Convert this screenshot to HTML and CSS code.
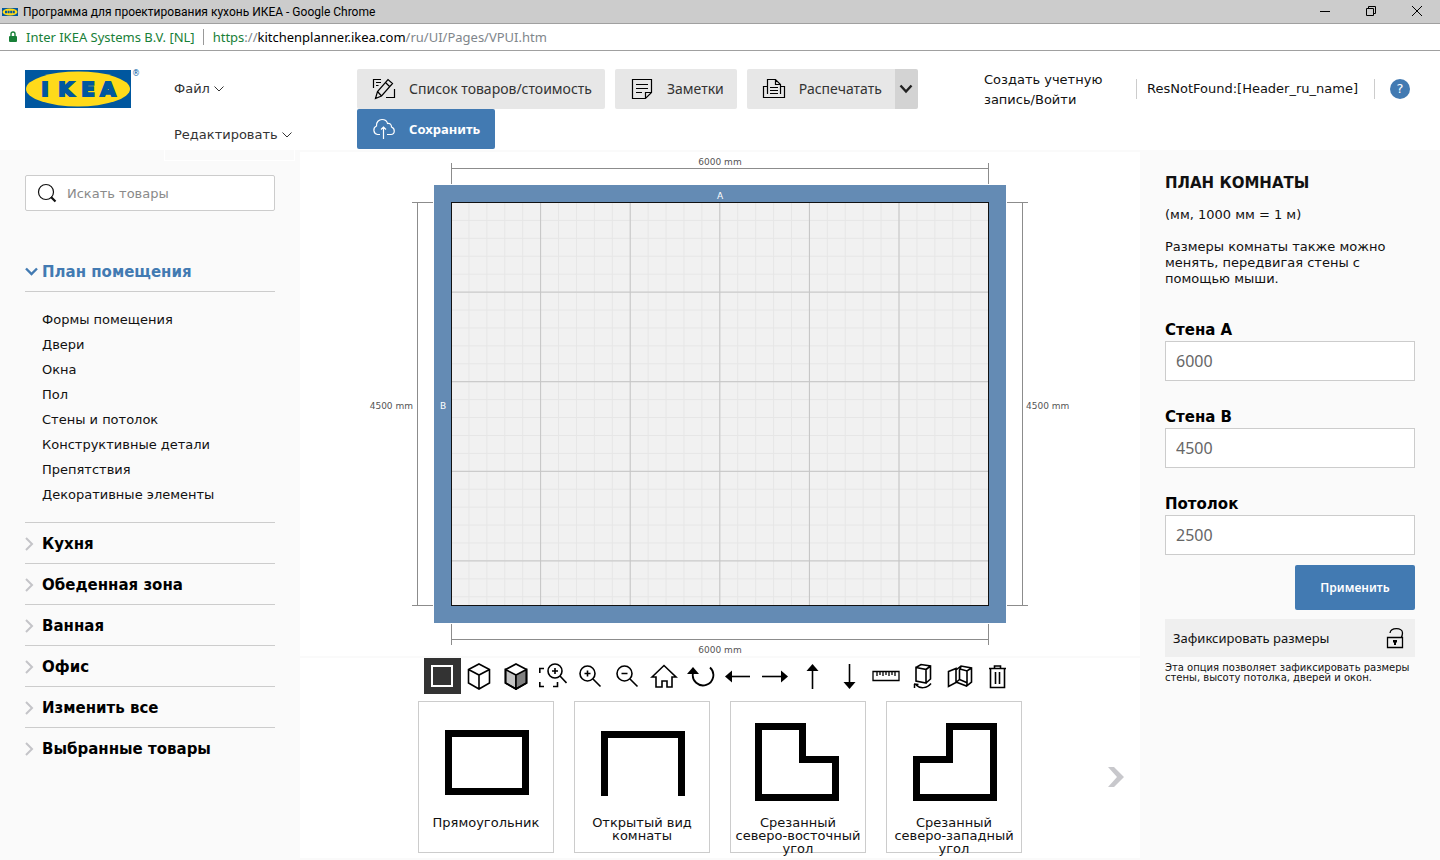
FILE: index.html
```html
<!DOCTYPE html>
<html lang="ru">
<head>
    <meta charset="UTF-8">
    <title>Программа для проектирования кухонь ИКЕА</title>
    <meta name="viewport" content="width=device-width, initial-scale=1">
    <link rel="stylesheet" href="styles.css">
</head>
<body>
    <div class="titlebar">
        <svg class="favicon" width="16" height="8" viewBox="0 0 16 8"><rect width="16" height="8" fill="#00579f"/><ellipse cx="8" cy="4" rx="7.5" ry="3.5" fill="#ffda1a"/><path d="M3 4h10" stroke="#00579f" stroke-width="2.4" stroke-dasharray="2 .6"/></svg>
        <span class="window-title">Программа для проектирования кухонь ИКЕА - Google Chrome</span>
        <div class="window-buttons">
            <button type="button" aria-label="Свернуть"><svg width="12" height="12" viewBox="0 0 12 12"><path d="M1 6.5h10"/></svg></button>
            <button type="button" aria-label="Развернуть"><svg width="12" height="12" viewBox="0 0 12 12"><path d="M1.5 3.5h7v7h-7zM3.5 3V1.5h7v7H9"/></svg></button>
            <button type="button" aria-label="Закрыть"><svg width="12" height="12" viewBox="0 0 12 12"><path d="M1 1l10 10M11 1L1 11"/></svg></button>
        </div>
    </div>
    <div class="addressbar">
        <svg class="lock" width="8" height="12" viewBox="0 0 8 12"><path d="M2 6V3a2 2 0 0 1 4 0v3" fill="none" stroke="#188038" stroke-width="1.4"/><rect y="5" width="8" height="6" rx="1" fill="#188038"/></svg>
        <span class="cert">Inter IKEA Systems B.V. [NL]</span>
        <span class="url"><span class="scheme">https</span>://<span class="host">kitchenplanner.ikea.com</span>/ru/UI/Pages/VPUI.htm</span>
    </div>

    <header class="header">
        <a class="logo" href="#" aria-label="IKEA">
            <svg width="115" height="40" viewBox="0 0 115 40">
                <rect y="1" width="106" height="38" fill="#00579f"/>
                <ellipse cx="53" cy="20" rx="52" ry="17.5" fill="#ffda1a"/>
                <text class="logo-text" x="20 41 63 83" y="27" text-anchor="middle">IKEA</text>
                <text class="logo-mark" x="107" y="7">®</text>
            </svg>
        </a>
        <nav class="menu">
            <button type="button">Файл<svg width="10" height="6" viewBox="0 0 10 6"><path d="M.5.5L5 5 9.5.5"/></svg></button>
            <button type="button">Редактировать<svg width="10" height="6" viewBox="0 0 10 6"><path d="M.5.5L5 5 9.5.5"/></svg></button>
        </nav>
        <div class="actions">
            <button type="button" class="btn">
                <svg width="24" height="24" viewBox="0 0 24 24"><path d="M9 2.5H1.5V11M4 5.5h5M4 8.5h2.5M3.500 21.500l2-7L16 2.500l4.500 4L9.500 19zM5.500 14.500l4 4.500M13.500 5.500l4 4M14 20.500h8.500V12"/></svg>
                Список товаров/стоимость
            </button>
            <button type="button" class="btn">
                <svg width="24" height="24" viewBox="0 0 24 24"><path d="M15.500 21.500h-13v-19h19v13zM15.500 21.500v-6h6M6 7.500h12M6 11.500h12M6 15.500h6"/></svg>
                Заметки
            </button>
            <div class="split">
                <button type="button" class="btn">
                    <svg width="24" height="24" viewBox="0 0 24 24"><path d="M5 9.500H1.500v11h21v-11H19M5.500 17V2.500h8l5 5V17M13.500 2.500v5h5M8 10.500h8M8 13.500h8M8 16.500h8"/></svg>
                    Распечатать
                </button>
                <button type="button" class="split-toggle" aria-label="Еще"><svg width="14" height="10" viewBox="0 0 14 10"><path d="M1.500 1.500L7 7.500l5.500-6"/></svg></button>
            </div>
            <button type="button" class="btn btn-save">
                <svg width="24" height="24" viewBox="0 0 24 24"><path d="M8 17.500H5.500a4.500 4.500 0 0 1-1-8.500C4 5 7 2.500 10 2.500c3 0 5 1.500 5.500 4 2.500-.5 4 1 4 3.500 4 1.500 3.500 7.500-.5 7.500h-4M11.500 22V10M9 12.500l2.500-2.500 2.500 2.500"/></svg>
                Сохранить
            </button>
        </div>
        <div class="user">
            <a class="signup" href="#">Создать учетную запись/Войти</a>
            <span class="store">ResNotFound:[Header_ru_name]</span>
            <button type="button" class="help">?</button>
        </div>
    </header>

    <div class="workspace">
        <aside class="catalog">
            <label class="search">
                <svg width="20" height="20" viewBox="0 0 20 20"><circle cx="9" cy="9" r="7.5" fill="none" stroke="#111" stroke-width="1.2"/><path d="M14 14l4.500 4.500" stroke="#111" stroke-width="2.2"/></svg>
                <input type="search" placeholder="Искать товары" aria-label="Искать товары">
            </label>
            <ul class="sections">
                <li class="open">
                    <button type="button" class="section"><svg width="13" height="9" viewBox="0 0 13 9"><path d="M1 1.500L6.500 7 12 1.500"/></svg>План помещения</button>
                    <ul class="items">
                        <li><a href="#">Формы помещения</a></li>
                        <li><a href="#">Двери</a></li>
                        <li><a href="#">Окна</a></li>
                        <li><a href="#">Пол</a></li>
                        <li><a href="#">Стены и потолок</a></li>
                        <li><a href="#">Конструктивные детали</a></li>
                        <li><a href="#">Препятствия</a></li>
                        <li><a href="#">Декоративные элементы</a></li>
                    </ul>
                </li>
                <li><button type="button" class="section"><svg width="9" height="14" viewBox="0 0 9 14"><path d="M1 1l6 6-6 6"/></svg>Кухня</button></li>
                <li><button type="button" class="section"><svg width="9" height="14" viewBox="0 0 9 14"><path d="M1 1l6 6-6 6"/></svg>Обеденная зона</button></li>
                <li><button type="button" class="section"><svg width="9" height="14" viewBox="0 0 9 14"><path d="M1 1l6 6-6 6"/></svg>Ванная</button></li>
                <li><button type="button" class="section"><svg width="9" height="14" viewBox="0 0 9 14"><path d="M1 1l6 6-6 6"/></svg>Офис</button></li>
                <li><button type="button" class="section"><svg width="9" height="14" viewBox="0 0 9 14"><path d="M1 1l6 6-6 6"/></svg>Изменить все</button></li>
                <li><button type="button" class="section"><svg width="9" height="14" viewBox="0 0 9 14"><path d="M1 1l6 6-6 6"/></svg>Выбранные товары</button></li>
            </ul>
        </aside>

        <main class="canvas">
            <svg class="plan" viewBox="0 0 840 504">
                <defs>
                    <!-- minor grid step is 200 mm, major step is 1000 mm -->
                    <pattern id="minor" x="151.5" y="51" width="17.92" height="17.92" patternUnits="userSpaceOnUse"><path d="M17.42 0v17.92M0 17.42h17.92" stroke="#e6e6e6" fill="none"/></pattern>
                    <pattern id="major" x="151.5" y="51" width="89.6" height="89.6" patternUnits="userSpaceOnUse"><path d="M89.1 0v89.6M0 89.1h89.6" stroke="#c4c4c4" fill="none"/></pattern>
                </defs>
                <rect x="134" y="33" width="572" height="438" fill="#648bb4"/>
                <rect x="151.5" y="50.5" width="537" height="403" fill="#f1f1f1"/>
                <rect x="151.5" y="50.5" width="537" height="403" fill="url(#minor)"/>
                <rect x="151.5" y="50.5" width="537" height="403" fill="url(#major)"/>
                <rect x="151.5" y="50.5" width="537" height="403" fill="none" stroke="#111"/>
                <path class="dim" d="M151.500 11v21M688.500 11v21M151.500 16.500h537M151.500 472v21M688.500 472v21M151.500 487.500h537M112 50.500h21M112 453.500h21M117.500 50.500v403M707 50.500h21M707 453.500h21M722.500 50.500v403"/>
                <text class="dim-text" x="420" y="13" text-anchor="middle">6000 mm</text>
                <text class="dim-text" x="420" y="501" text-anchor="middle">6000 mm</text>
                <text class="dim-text" x="113" y="257" text-anchor="end">4500 mm</text>
                <text class="dim-text" x="726" y="257">4500 mm</text>
                <text class="wall-text" x="420" y="47" text-anchor="middle">A</text>
                <text class="wall-text" x="143" y="257" text-anchor="middle">B</text>
            </svg>
            <div class="dock">
                <div class="toolbar">
                    <button type="button" class="active" aria-label="2D"><svg width="28" height="28" viewBox="0 0 28 28"><path d="M4 4h20v20H4z" stroke-width="2"/></svg></button>
                    <button type="button" aria-label="3D"><svg width="28" height="28" viewBox="0 0 28 28"><path d="M14 2l10.500 5.500v13.500L14 27 3.500 21V7.500zM3.500 7.500L14 13l10.500-5.500M14 13v14"/></svg></button>
                    <button type="button" aria-label="3D с заливкой"><svg width="28" height="28" viewBox="0 0 28 28"><path d="M3.500 7.500L14 13v14L3.500 21z" fill="#c4c4c4"/><path d="M24.500 7.500L14 13v14l10.500-6z" fill="#808080"/><path d="M14 2l10.500 5.500v13.500L14 27 3.500 21V7.500z" stroke-width="1.8"/></svg></button>
                    <button type="button" aria-label="Показать все"><svg width="28" height="28" viewBox="0 0 28 28"><path d="M5 6.500H.8V11M.8 20v4.500H5M14 24.500h4.500V20"/><circle cx="16" cy="9" r="7"/><path d="M13 9h6M16 6v6M21 14l6.500 7"/></svg></button>
                    <button type="button" aria-label="Увеличить"><svg width="28" height="28" viewBox="0 0 28 28"><circle cx="11.500" cy="11.500" r="7.500"/><path d="M8.500 11.500h6M11.500 8.500v6M17 17l7.500 7.500"/></svg></button>
                    <button type="button" aria-label="Уменьшить"><svg width="28" height="28" viewBox="0 0 28 28"><circle cx="11.500" cy="11.500" r="7.500"/><path d="M8.500 11.500h6M17 17l7.500 7.500"/></svg></button>
                    <button type="button" aria-label="Домой"><svg width="28" height="28" viewBox="0 0 28 28"><path d="M2 15L14 3.500 26 15h-4v10h-5v-6h-5v6H6V15z"/></svg></button>
                    <button type="button" aria-label="Повернуть"><svg width="28" height="28" viewBox="0 0 28 28"><path d="M6 11a10.300 10.300 0 1 0 17-5.500" stroke-width="1.8"/><path d="M0 12l6-7 6 7z" fill="#000" stroke="none"/></svg></button>
                    <button type="button" aria-label="Влево"><svg width="28" height="28" viewBox="0 0 28 28"><path d="M8 14.500h18"/><path d="M8 8.500v12l-7-6z" fill="#000" stroke="none"/></svg></button>
                    <button type="button" aria-label="Вправо"><svg width="28" height="28" viewBox="0 0 28 28"><path d="M1 14.500h19"/><path d="M20 8.500v12l7-6z" fill="#000" stroke="none"/></svg></button>
                    <button type="button" aria-label="Вверх"><svg width="28" height="28" viewBox="0 0 28 28"><path d="M14.500 27V8"/><path d="M8.500 9h12l-6-7z" fill="#000" stroke="none"/></svg></button>
                    <button type="button" aria-label="Вниз"><svg width="28" height="28" viewBox="0 0 28 28"><path d="M14.500 2v19"/><path d="M8.500 20h12l-6 7z" fill="#000" stroke="none"/></svg></button>
                    <button type="button" aria-label="Измерить"><svg width="28" height="28" viewBox="0 0 28 28"><path d="M1 9.500h26v9H1zM5 10v4M8 10v3M11 10v4M14 10v3M17 10v4M20 10v3M23 10v4" stroke-width="1.3"/></svg></button>
                    <button type="button" aria-label="Повернуть предмет"><svg width="28" height="28" viewBox="0 0 28 28"><path d="M7 5.500l10 2v13.500l-10-2zM7 5.500l5-3 9.500 1.500V17L17 21M17 7.500l4.500-3.500"/><path d="M7 23c4 4 11 3.500 15-1.500M5 22l4.500.5M5.500 22v4" stroke-width="1.5"/></svg></button>
                    <button type="button" aria-label="Открыть дверцы"><svg width="28" height="28" viewBox="0 0 28 28"><path d="M2.500 9.500l7.500-3v14l-7.500 4zM10 8l5-4 10.500 2v14l-5 4-10.500-4M21 9v14.500M15 4.500L14 7l7 2 4.500-3M13.500 7.500v10l7 3M13.500 17.500l-3 2.500"/></svg></button>
                    <button type="button" aria-label="Удалить"><svg width="28" height="28" viewBox="0 0 28 28"><path d="M6 6.500h17M11.500 6V4h6v2M7.500 7v18.500h14V7M12.500 10v12M16.500 10v12"/></svg></button>
                </div>
                <div class="shapes">
                    <div class="cards">
                        <button type="button" class="card">
                            <svg width="100" height="100" viewBox="0 0 100 100"><path d="M12.500 23.500h77v58h-77z"/></svg>
                            <span>Прямоугольник</span>
                        </button>
                        <button type="button" class="card">
                            <svg width="100" height="100" viewBox="0 0 100 100"><path d="M12.500 86V24.500h77V86"/></svg>
                            <span>Открытый вид комнаты</span>
                        </button>
                        <button type="button" class="card">
                            <svg width="100" height="100" viewBox="0 0 100 100"><path d="M10.500 16.500h44v33h33v38h-77z"/></svg>
                            <span>Срезанный северо-восточный угол</span>
                        </button>
                        <button type="button" class="card">
                            <svg width="100" height="100" viewBox="0 0 100 100"><path d="M89.500 16.500h-44v33h-33v38h77z"/></svg>
                            <span>Срезанный северо-западный угол</span>
                        </button>
                    </div>
                    <button type="button" class="next" aria-label="Далее"><svg width="16" height="20" viewBox="0 0 16 20"><path d="M0 0h6l10 10L6 20H0l9-10z"/></svg></button>
                </div>
            </div>
        </main>

        <aside class="room">
            <h2>ПЛАН КОМНАТЫ</h2>
            <p>(мм, 1000 мм = 1 м)</p>
            <p>Размеры комнаты также можно менять, передвигая стены с помощью мыши.</p>
            <form class="room-form">
                <label for="wall-a">Стена A</label>
                <input type="text" id="wall-a" value="6000">
                <label for="wall-b">Стена B</label>
                <input type="text" id="wall-b" value="4500">
                <label for="ceiling">Потолок</label>
                <input type="text" id="ceiling" value="2500">
                <button type="button" class="apply">Применить</button>
            </form>
            <button type="button" class="fix-size">
                Зафиксировать размеры
                <svg width="18" height="22" viewBox="0 0 18 22"><path d="M4 6c1-6 12.500-5.500 12.500 0 0 2-.5 3.500-1.500 5M1.500 10.500h15v10h-15z" fill="none" stroke="#000" stroke-width="1.3"/><path d="M7 13h4v2.500H10V18h1H7h1v-2.500H7z" fill="#000"/></svg>
            </button>
            <p class="hint">Эта опция позволяет зафиксировать размеры стены, высоту потолка, дверей и окон.</p>
        </aside>
    </div>
</body>
</html>
```

FILE: styles.css
```css
* { box-sizing: border-box; }
body { margin: 0; min-height: 100vh; display: flex; flex-direction: column; background: #fff; color: #111; font: 13px/16px "DejaVu Sans", sans-serif; }
button, input { font: inherit; color: inherit; }
button { padding: 0; border: 0; background: none; cursor: pointer; }
a { color: inherit; text-decoration: none; }
svg { display: block; flex: none; }
ul { margin: 0; padding: 0; list-style: none; }

.titlebar { display: flex; align-items: center; height: 24px; padding: 0 17px 0 2px; background: #ccc; border-bottom: 1px solid #a0a0a0; font: 12px/16px Roboto, sans-serif; color: #000; }
.window-title { margin-left: 5px; }
.window-buttons { display: flex; gap: 34px; margin-left: auto; padding-bottom: 2px; }
.window-buttons path { fill: none; stroke: #000; }
.addressbar { display: flex; align-items: center; height: 27px; padding: 0 9px; border-bottom: 1px solid #a0a0a0; font: 13px/20px "Noto Sans", sans-serif; }
.cert { margin-left: 9px; padding-right: 8px; border-right: 1px solid #999; line-height: 16px; color: #188038; }
.url { margin-left: 9px; color: #80868b; }
.scheme { color: #188038; }
.host { color: #000; }

.header { display: flex; height: 99px; }
.logo { flex: none; width: 164px; padding: 18px 0 0 25px; }
.logo-text { font: bold 20px "DejaVu Sans", sans-serif; fill: #00579f; stroke: #00579f; stroke-width: 2; }
.logo-mark { font: 8px "DejaVu Sans", sans-serif; fill: #00579f; }
.menu { position: relative; z-index: 1; display: flex; flex: none; flex-direction: column; align-items: flex-start; width: 193px; padding-top: 12px; }
.menu button { display: flex; align-items: center; gap: 4px; flex: none; height: 52px; padding: 0 2px 0 9px; border: 1px solid #fff; color: #333; }
.menu button + button { margin-top: -6px; }
.menu path { fill: none; stroke: #333; }
.actions { flex: 1; display: flex; flex-wrap: wrap; align-content: flex-start; gap: 0 10px; padding-top: 18px; }
.btn { display: flex; align-items: center; gap: 13px; height: 40px; padding: 0 13px 0 15px; background: #e7e7e7; border-radius: 2px; font: 14px/20px "Noto Sans", sans-serif; color: #333; white-space: nowrap; }
.btn path { fill: none; stroke: #000; stroke-width: 1.2; }
.btn-save { padding-right: 15px; background: #427ab2; color: #fff; font-size: 13px; font-weight: bold; }
.btn-save path { stroke: #fff; }
.split { display: flex; }
.split .btn { border-radius: 2px 0 0 2px; }
.split-toggle { display: flex; align-items: center; justify-content: center; width: 23px; background: #d3d3d3; border-radius: 0 2px 2px 0; }
.split-toggle path { fill: none; stroke: #222; stroke-width: 2.4; }
.user { display: flex; flex: none; align-items: flex-start; padding: 19px 30px 0 0; line-height: 20px; }
.signup { width: 152px; padding-right: 20px; }
.store { margin-top: 9px; padding: 0 16px 0 10px; border: solid #ccc; border-width: 0 1px; }
.help { width: 20px; height: 20px; margin: 9px 0 0 15px; border-radius: 50%; background: #427ab2; color: #fff; }

.workspace { flex: 1; display: grid; grid-template-columns: 300px 1fr 300px; background: #fafafa; }
.catalog { padding: 25px; }
.search { display: flex; align-items: center; height: 36px; padding-left: 11px; background: #fff; border: 1px solid #ccc; border-radius: 2px; }
.search input { flex: 1; min-width: 0; margin-left: 10px; padding: 1px 0 0; border: 0; outline: 0; background: none; }
.search input::placeholder { color: #8a8a8a; opacity: 1; }
.sections { margin-top: 41px; }
.sections > li { border-top: 1px solid #ccc; }
.sections > .open { border-top: 0; }
.section { display: flex; align-items: center; gap: 8px; width: 100%; height: 40px; padding-top: 2px; font-size: 15px; font-weight: bold; color: #000; }
.section path { fill: none; stroke: #c4c4c8; stroke-width: 2; }
.open .section { gap: 4px; padding-top: 0; color: #427ab2; border-bottom: 1px solid #ccc; }
.open .section path { stroke: #427ab2; stroke-width: 2.4; }
.items { padding: 15px 0 15px 17px; line-height: 25px; }

.canvas { display: flex; flex-direction: column; margin: 2px 0; background: #fff; }
.plan { width: 100%; height: auto; }
.dim { fill: none; stroke: #8c8c8c; }
.dim-text { font: 9px "DejaVu Sans", sans-serif; fill: #555; }
.wall-text { font: 9px "DejaVu Sans", sans-serif; fill: #fff; }
.dock { border-top: 2px solid #fafafa; }
.toolbar { display: flex; justify-content: center; }
.toolbar button { display: flex; align-items: center; justify-content: center; width: 37px; height: 36px; padding-right: 1px; }
.toolbar svg { fill: none; stroke: #000; stroke-width: 1.6; }
.toolbar .active { background: #333; }
.toolbar .active svg { stroke: #fff; }
.shapes { display: grid; grid-template-columns: 1fr auto 1fr; align-items: center; padding: 7px 16px 5px; }
.cards { grid-column: 2; display: flex; gap: 20px; }
.card { display: flex; flex-direction: column; align-items: center; width: 136px; height: 152px; padding: 8px 4px 0; background: #fff; border: 1px solid #ccc; line-height: 13px; }
.card svg { margin-bottom: 6px; fill: none; stroke: #000; stroke-width: 7; }
.next { justify-self: end; }
.next svg { fill: #c8c8cc; }

.room { padding: 25px; }
.room h2 { margin: 0; font-size: 15px; line-height: 16px; }
.room p { margin: 16px 0 0; }
.room-form { display: flex; flex-direction: column; margin-top: 32px; }
.room-form label { font-size: 15px; font-weight: bold; line-height: 22px; color: #000; }
.room-form input { width: 100%; height: 40px; margin: 0 0 25px; padding: 0 10px; border: 1px solid #ccc; background: #fff; font: 16px "Noto Sans", sans-serif; color: #666; }
.room-form .apply { align-self: flex-end; width: 120px; height: 45px; margin-top: -15px; border-radius: 2px; background: #427ab2; color: #fff; font: 600 12px "Noto Sans", sans-serif; }
.fix-size { display: flex; align-items: center; justify-content: space-between; width: 100%; height: 38px; margin-top: 9px; padding: 0 11px 0 8px; background: #efefef; font: 13px "Noto Sans", sans-serif; }
.room .hint { margin-top: 6px; font-size: 10px; line-height: 10px; }
```
